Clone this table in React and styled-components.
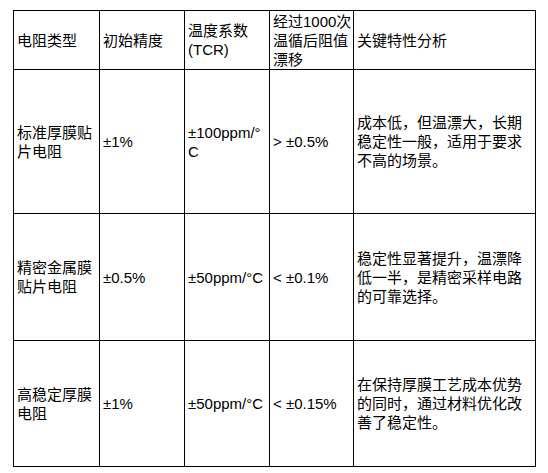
import React from "react";
import styled, { createGlobalStyle } from "styled-components";

const GlobalStyle = createGlobalStyle`
  html, body {
    margin: 0;
    padding: 0;
    background: #ffffff;
  }
  body {
    font-family: "Liberation Sans", "Noto Sans CJK SC", sans-serif;
  }
`;

const Page = styled.div`
  padding: 10px 0 0 13px;
`;

const Table = styled.table`
  width: 522px;
  border-collapse: collapse;
  table-layout: fixed;
  color: #000;
  font-size: 15px;
  line-height: 19px;
`;

const Row = styled.tr`
  height: ${(p) => p.h}px;
`;

const Cell = styled.td`
  border: 1px solid #000;
  padding: 0 0 0 3px;
  vertical-align: middle;
  word-break: ${(p) => (p.$loose ? "normal" : "break-all")};
  text-align: left;
  font-weight: normal;
`;

const HeadCell = styled(Cell).attrs({ as: "th", $loose: true })``;

const widths = [86, 85, 85, 84, 182];

const header = [
  "电阻类型",
  "初始精度",
  "温度系数(TCR)",
  "经过1000次温循后阻值漂移",
  "关键特性分析",
];

const rows = [
  {
    h: 144,
    cells: [
      "标准厚膜贴片电阻",
      "±1%",
      "±100ppm/°C",
      "> ±0.5%",
      "成本低，但温漂大，长期稳定性一般，适用于要求不高的场景。",
    ],
  },
  {
    h: 127,
    cells: [
      "精密金属膜贴片电阻",
      "±0.5%",
      "±50ppm/°C",
      "< ±0.1%",
      "稳定性显著提升，温漂降低一半，是精密采样电路的可靠选择。",
    ],
  },
  {
    h: 126,
    cells: [
      "高稳定厚膜电阻",
      "±1%",
      "±50ppm/°C",
      "< ±0.15%",
      "在保持厚膜工艺成本优势的同时，通过材料优化改善了稳定性。",
    ],
  },
];

export default function App() {
  return (
    <Page>
      <GlobalStyle />
      <Table>
        <colgroup>
          {widths.map((w, i) => (
            <col key={i} style={{ width: w }} />
          ))}
        </colgroup>
        <thead>
          <Row h={59}>
            {header.map((t) => (
              <HeadCell key={t}>{t}</HeadCell>
            ))}
          </Row>
        </thead>
        <tbody>
          {rows.map((r) => (
            <Row key={r.cells[0]} h={r.h}>
              {r.cells.map((c, i) => (
                <Cell key={i}>{c}</Cell>
              ))}
            </Row>
          ))}
        </tbody>
      </Table>
    </Page>
  );
}
